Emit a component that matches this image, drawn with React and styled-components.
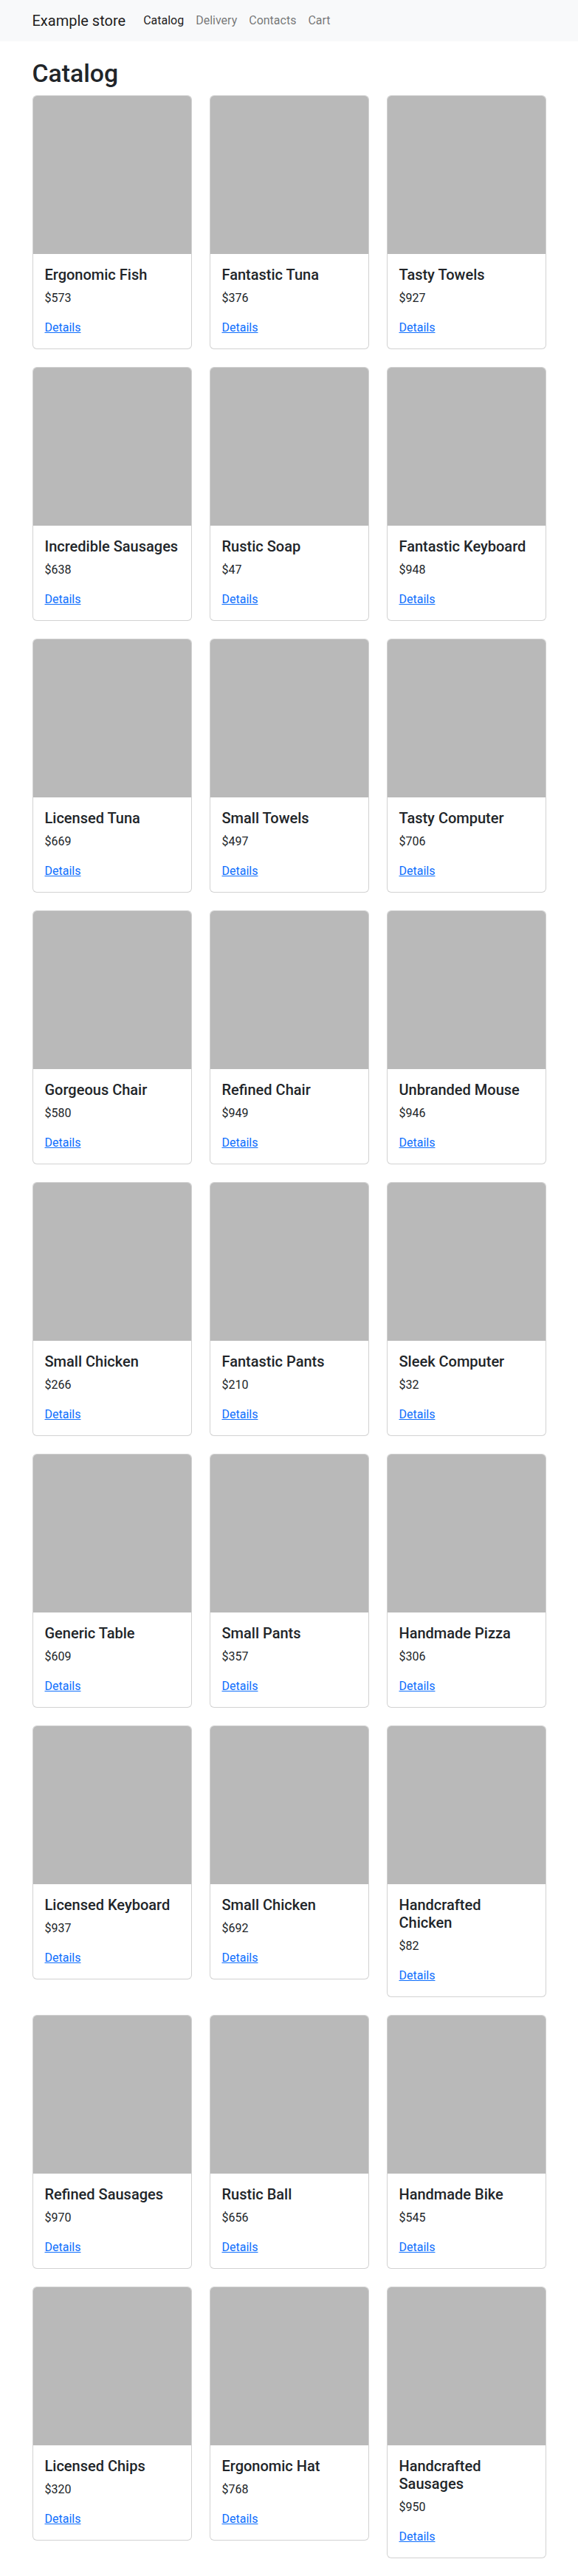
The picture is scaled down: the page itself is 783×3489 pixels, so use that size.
import React from "react";
import styled, { createGlobalStyle } from "styled-components";

const GlobalStyle = createGlobalStyle`
  *, *::before, *::after { box-sizing: border-box; }
  body {
    margin: 0;
    font-family: Roboto, "Liberation Sans", Arial, sans-serif;
    font-size: 16px;
    line-height: 1.5;
    color: #212529;
    background: #fff;
  }
`;

const Navbar = styled.nav`
  background: #f8f9fa;
  padding: 8px 0;
`;

const Container = styled.div`
  max-width: 720px;
  margin: 0 auto;
  padding: 0 12px;
`;

const NavInner = styled(Container)`
  display: flex;
  align-items: center;
`;

const Brand = styled.a`
  font-size: 20px;
  line-height: 30px;
  padding: 5px 0;
  margin-right: 16px;
  color: rgba(0, 0, 0, 0.9);
  text-decoration: none;
`;

const NavList = styled.ul`
  display: flex;
  list-style: none;
  margin: 0;
  padding: 0;
`;

const NavLink = styled.a`
  display: block;
  padding: 8px;
  line-height: 24px;
  text-decoration: none;
  color: ${(p) => (p.$active ? "rgba(0, 0, 0, 0.9)" : "rgba(0, 0, 0, 0.55)")};
`;

const Main = styled(Container)`
  padding-bottom: 24px;
`;

const Title = styled.h1`
  font-size: 33.75px;
  font-weight: 500;
  line-height: 1.2;
  margin: 24px 0 8px;
`;

const Grid = styled.div`
  display: grid;
  grid-template-columns: repeat(3, 1fr);
  column-gap: 24px;
  row-gap: 24px;
  align-items: start;
`;

const Card = styled.div`
  display: flex;
  flex-direction: column;
  border: 1px solid rgba(0, 0, 0, 0.175);
  border-radius: 6px;
  background: #fff;
  overflow: hidden;
`;

const CardImage = styled.div`
  aspect-ratio: 1 / 1;
  background: #b9b9b9;
`;

const CardBody = styled.div`
  padding: 16px;
`;

const CardTitle = styled.h5`
  font-size: 20px;
  font-weight: 500;
  line-height: 1.2;
  margin: 0 0 8px;
`;

const Price = styled.p`
  margin: 0 0 16px;
`;

const DetailsLink = styled.a`
  color: #0d6efd;
  text-decoration: underline;
`;

const products = [
  ["Ergonomic Fish", 573],
  ["Fantastic Tuna", 376],
  ["Tasty Towels", 927],
  ["Incredible Sausages", 638],
  ["Rustic Soap", 47],
  ["Fantastic Keyboard", 948],
  ["Licensed Tuna", 669],
  ["Small Towels", 497],
  ["Tasty Computer", 706],
  ["Gorgeous Chair", 580],
  ["Refined Chair", 949],
  ["Unbranded Mouse", 946],
  ["Small Chicken", 266],
  ["Fantastic Pants", 210],
  ["Sleek Computer", 32],
  ["Generic Table", 609],
  ["Small Pants", 357],
  ["Handmade Pizza", 306],
  ["Licensed Keyboard", 937],
  ["Small Chicken", 692],
  ["Handcrafted Chicken", 82],
  ["Refined Sausages", 970],
  ["Rustic Ball", 656],
  ["Handmade Bike", 545],
  ["Licensed Chips", 320],
  ["Ergonomic Hat", 768],
  ["Handcrafted Sausages", 950],
];

const links = [
  ["Catalog", true],
  ["Delivery", false],
  ["Contacts", false],
  ["Cart", false],
];

export default function App() {
  return (
    <>
      <GlobalStyle />
      <Navbar>
        <NavInner>
          <Brand href="#">Example store</Brand>
          <NavList>
            {links.map(([label, active]) => (
              <li key={label}>
                <NavLink href="#" $active={active}>
                  {label}
                </NavLink>
              </li>
            ))}
          </NavList>
        </NavInner>
      </Navbar>
      <Main>
        <Title>Catalog</Title>
        <Grid>
          {products.map(([name, price], i) => (
            <Card key={i}>
              <CardImage />
              <CardBody>
                <CardTitle>{name}</CardTitle>
                <Price>${price}</Price>
                <DetailsLink href="#">Details</DetailsLink>
              </CardBody>
            </Card>
          ))}
        </Grid>
      </Main>
    </>
  );
}
